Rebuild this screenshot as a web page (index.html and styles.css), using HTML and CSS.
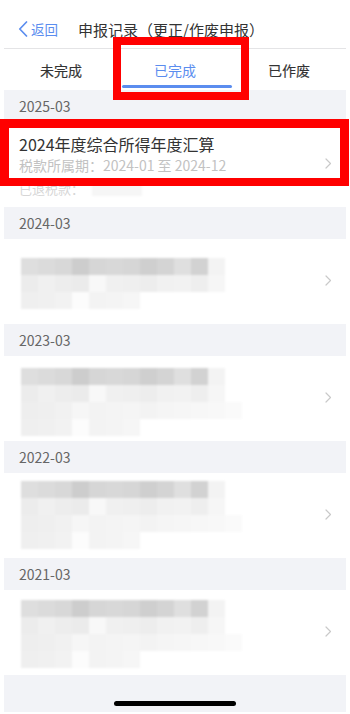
FILE: index.html
```html
<!DOCTYPE html>
<html lang="zh-CN">
<head>
<meta charset="utf-8">
<title>申报记录</title>
<link rel="stylesheet" href="styles.css">
</head>
<body>
<div class="screen">
  <header class="nav">
    <a class="back">
      <svg width="10" height="16" viewBox="0 0 10 16"><path d="M8.5 1 L1.8 8 L8.5 15" fill="none" stroke="#5b8def" stroke-width="1.7" stroke-linecap="round" stroke-linejoin="round"/></svg>
      <span>返回</span>
    </a>
    <h1 class="title">申报记录（更正/作废申报）</h1>
  </header>

  <nav class="tabs">
    <div class="tab">未完成</div>
    <div class="tab active">已完成</div>
    <div class="tab">已作废</div>
  </nav>

  <section class="group">
    <div class="month">2025-03</div>
    <div class="card">
      <div class="info">
        <div class="name">2024年度综合所得年度汇算</div>
        <div class="period">税款所属期：2024-01 至 2024-12</div>
        <div class="refund">已退税款：<span class="smudge"></span></div>
      </div>
      <svg class="arrow" width="7" height="11" viewBox="0 0 7 11"><path d="M1 1 L5.5 5.5 L1 10" fill="none" stroke="#c9c9c9" stroke-width="1.2" stroke-linecap="round" stroke-linejoin="round"/></svg>
    </div>
  </section>

  <section class="group">
    <div class="month">2024-03</div>
    <div class="card">
      <div class="mosaic top19">
        <div class="r r1"></div>
        <div class="r r2"></div>
        <div class="r r4"></div>
      </div>
      <svg class="arrow" width="7" height="11" viewBox="0 0 7 11"><path d="M1 1 L5.5 5.5 L1 10" fill="none" stroke="#c9c9c9" stroke-width="1.2" stroke-linecap="round" stroke-linejoin="round"/></svg>
    </div>
  </section>

  <section class="group">
    <div class="month">2023-03</div>
    <div class="card">
      <div class="mosaic top12">
        <div class="r r1"></div>
        <div class="r r2"></div>
        <div class="r r3"></div>
        <div class="r r4"></div>
      </div>
      <svg class="arrow" width="7" height="11" viewBox="0 0 7 11"><path d="M1 1 L5.5 5.5 L1 10" fill="none" stroke="#c9c9c9" stroke-width="1.2" stroke-linecap="round" stroke-linejoin="round"/></svg>
    </div>
  </section>

  <section class="group">
    <div class="month">2022-03</div>
    <div class="card">
      <div class="mosaic top8">
        <div class="r r1"></div>
        <div class="r r2"></div>
        <div class="r r3"></div>
        <div class="r r4"></div>
      </div>
      <svg class="arrow" width="7" height="11" viewBox="0 0 7 11"><path d="M1 1 L5.5 5.5 L1 10" fill="none" stroke="#c9c9c9" stroke-width="1.2" stroke-linecap="round" stroke-linejoin="round"/></svg>
    </div>
  </section>

  <section class="group">
    <div class="month">2021-03</div>
    <div class="card">
      <div class="mosaic top10">
        <div class="r r1"></div>
        <div class="r r2"></div>
        <div class="r r3"></div>
        <div class="r r4"></div>
      </div>
      <svg class="arrow" width="7" height="11" viewBox="0 0 7 11"><path d="M1 1 L5.5 5.5 L1 10" fill="none" stroke="#c9c9c9" stroke-width="1.2" stroke-linecap="round" stroke-linejoin="round"/></svg>
    </div>
  </section>

  <div class="home"><span class="bar"></span></div>
</div>

<div class="mark mark-tab"></div>
<div class="mark mark-card"></div>
</body>
</html>
```

FILE: styles.css
```css
html, body {
  margin: 0;
  padding: 0;
  background: #ffffff;
}

body {
  position: relative;
  width: 350px;
  height: 714px;
  overflow: hidden;
  font-family: "Noto Sans CJK SC", "Noto Sans", sans-serif;
  color: #333333;
}

.screen {
  margin: 0 4px;
  width: 342px;
  height: 712px;
  display: flex;
  flex-direction: column;
  background: #f2f3f7;
}

/* nav bar */
.nav {
  height: 38px;
  padding-top: 10px;
  display: flex;
  align-items: center;
  background: #ffffff;
  border-bottom: 1px solid #e4e4e6;
}

.back {
  display: flex;
  align-items: center;
  gap: 3px;
  margin-left: 14px;
  color: #5b8def;
  font-size: 13.5px;
}

.title {
  margin: 0 0 0 20px;
  font-size: 15px;
  font-weight: 400;
  color: #333333;
  letter-spacing: 0;
}

/* tabs */
.tabs {
  height: 41px;
  display: grid;
  grid-template-columns: 1fr 1fr 1fr;
  background: #ffffff;
}

.tab {
  position: relative;
  display: flex;
  align-items: center;
  justify-content: center;
  font-size: 14px;
  font-weight: 400;
  color: #333333;
  -webkit-text-stroke: 0.15px #333333;
}

.tab.active {
  color: #5b8def;
  -webkit-text-stroke: 0;
}

.tab.active::after {
  content: "";
  position: absolute;
  left: 4px;
  right: 0;
  bottom: 2px;
  height: 3px;
  border-radius: 2px;
  background: #5b8def;
}

/* groups */
.group {
  display: flex;
  flex-direction: column;
}

.month {
  height: 32px;
  display: flex;
  align-items: center;
  padding-left: 15px;
  font-size: 14px;
  color: #666666;
  background: #f2f3f7;
}

.card {
  height: 85px;
  display: flex;
  align-items: center;
  justify-content: space-between;
  padding: 0 14px 0 15px;
  background: #ffffff;
  position: relative;
}

.info {
  align-self: flex-start;
  padding-top: 11px;
}

.name {
  font-size: 16px;
  line-height: 22px;
  color: #333333;
}

.period {
  font-size: 14px;
  line-height: 20px;
  color: #c2c2c2;
}

.refund {
  margin-top: 5px;
  display: flex;
  align-items: center;
  font-size: 13px;
  line-height: 18px;
  color: #d6d6d6;
}

.smudge {
  width: 50px;
  height: 14px;
  margin-left: 8px;
  background: #f6f6f6;
  filter: blur(1px);
}

.arrow {
  flex: none;
  margin-top: -2px;
}

/* mosaic blocks (blurred private data) */
.mosaic {
  align-self: flex-start;
  margin-left: 2px;
  display: flex;
  flex-direction: column;
  filter: blur(0.8px);
}

.top19 { margin-top: 19px; }
.top12 { margin-top: 12px; }
.top8  { margin-top: 8px; }
.top10 { margin-top: 10px; }

.r { height: 17px; }

.r1 {
  width: 204px;
  background: linear-gradient(90deg,
    #dedede 0 17px, #dbdbdb 17px 34px, #d8d8d8 34px 51px, #cdcdcd 51px 68px,
    #d6d6d6 68px 85px, #d8d8d8 85px 102px, #d6d6d6 102px 119px, #cfcfcf 119px 136px,
    #d4d4d4 136px 153px, #dfdfdf 153px 170px, #d2d2d2 170px 187px, #f3f3f3 187px 204px);
}

.r2 {
  width: 204px;
  background: linear-gradient(90deg,
    #ececec 0 17px, #f0f0f0 17px 34px, #ededed 34px 51px, #ebebeb 51px 68px,
    #f8f8f8 68px 85px, #f0f0f0 85px 102px, #efefef 102px 119px, #ededed 119px 136px,
    #f1f1f1 136px 153px, #f2f2f2 153px 170px, #eeeeee 170px 187px, #f6f6f6 187px 204px);
}

.r3 {
  width: 221px;
  background: linear-gradient(90deg,
    #eeeeee 0 17px, #efefef 17px 34px, #f1f1f1 34px 51px, #f6f6f6 51px 68px,
    #f3f3f3 68px 85px, #f4f4f4 85px 102px, #f5f5f5 102px 119px, #f3f3f3 119px 136px,
    #f5f5f5 136px 153px, #f6f6f6 153px 170px, #f7f7f7 170px 187px, #f8f8f8 187px 204px,
    #fafafa 204px 221px);
}

.r4 {
  width: 119px;
  background: linear-gradient(90deg,
    #efefef 0 17px, #f0f0f0 17px 34px, #f2f2f2 34px 51px, #fcfcfc 51px 68px,
    #f3f3f3 68px 85px, #f4f4f4 85px 102px, #f6f6f6 102px 119px);
}

/* home indicator */
.home {
  flex: 1;
  display: flex;
  justify-content: center;
  align-items: flex-start;
  padding-top: 26px;
  background: #f2f3f7;
}

.bar {
  width: 122px;
  height: 5px;
  border-radius: 3px;
  background: #000000;
}

/* red annotation boxes */
.mark {
  position: absolute;
  box-sizing: border-box;
  border: 8px solid #ff0000;
}

.mark-tab {
  left: 113px;
  top: 37px;
  width: 136px;
  height: 63px;
}

.mark-card {
  left: 0;
  top: 119px;
  width: 349px;
  height: 67px;
  border-width: 9px 9px 8px 9px;
}
```
